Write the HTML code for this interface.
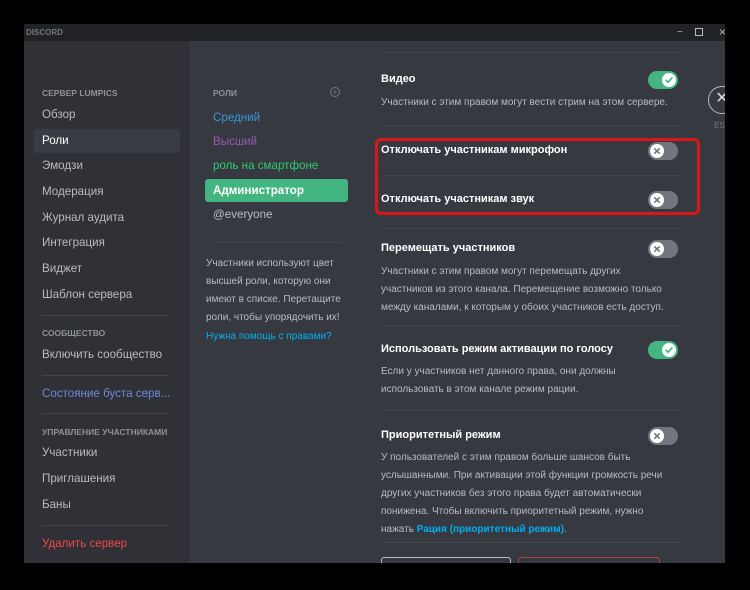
<!DOCTYPE html>
<html><head><meta charset="utf-8"><style>
*{margin:0;padding:0;box-sizing:border-box}
body{width:750px;height:590px;background:#000;position:relative;overflow:hidden;font-family:"Liberation Sans","Noto Sans CJK SC",sans-serif}
.a{position:absolute;white-space:nowrap}
.win{position:absolute;left:24px;top:24px;width:701px;height:539px;background:#36393f;overflow:hidden}
.tb{position:absolute;left:24px;top:24px;width:701px;height:17px;background:#202225}
.side{position:absolute;left:24px;top:41px;width:166px;height:522px;background:#2f3136}
.it{font-size:11.6px;color:#b9bbbe;left:42px}
.hd{font-size:8.5px;font-weight:bold;color:#8e9297;left:42px}
.sep{position:absolute;height:1px;background:#42454a}
.t{font-size:11px;font-weight:bold;color:#fff;left:381px}
.d{font-size:10px;color:#b9bbbe;left:381px;line-height:18px}
.tg{position:absolute;left:648px;width:30px;height:18px;border-radius:9px;background:#72767d}
.tg svg{position:absolute;top:2px;left:2px;width:14px;height:14px}
.tg.on{background:#43b581}.tg.on svg{left:14px}
</style></head><body>
<div class="win"></div>
<div class="tb"></div>
<div class="a" style="left:26px;top:28px;font-size:8px;font-weight:bold;color:#72767d">DISCORD</div>
<div class="a" style="left:677px;top:27px;font-size:10px;color:#b9bbbe">−</div>
<div class="a" style="left:695px;top:28px;width:8px;height:8px;border:1px solid #b9bbbe"></div>
<div class="a" style="left:719px;top:25px;font-size:12px;color:#b9bbbe">×</div>
<div class="side"></div>
<div class="a hd" style="top:88px">СЕРВЕР LUMPICS</div>
<div class="a it" style="top:108px">Обзор</div>
<div class="a" style="left:34px;top:129px;width:146px;height:24px;background:#393c43;border-radius:3px"></div>
<div class="a it" style="top:134px;color:#fff">Роли</div>
<div class="a it" style="top:159px">Эмодзи</div>
<div class="a it" style="top:185px">Модерация</div>
<div class="a it" style="top:211px">Журнал аудита</div>
<div class="a it" style="top:236px">Интеграция</div>
<div class="a it" style="top:262px">Виджет</div>
<div class="a it" style="top:288px">Шаблон сервера</div>
<div class="sep" style="left:42px;top:315px;width:126px"></div>
<div class="a hd" style="top:328px">СООБЩЕСТВО</div>
<div class="a it" style="top:348px">Включить сообщество</div>
<div class="sep" style="left:42px;top:375px;width:126px"></div>
<div class="a it" style="top:387px;color:#7289da">Состояние буста серв...</div>
<div class="sep" style="left:42px;top:413px;width:126px"></div>
<div class="a hd" style="top:427px">УПРАВЛЕНИЕ УЧАСТНИКАМИ</div>
<div class="a it" style="top:446px">Участники</div>
<div class="a it" style="top:472px">Приглашения</div>
<div class="a it" style="top:498px">Баны</div>
<div class="sep" style="left:42px;top:525px;width:126px"></div>
<div class="a it" style="top:537px;color:#f04747">Удалить сервер</div>

<div class="a hd" style="left:213px;top:88px">РОЛИ</div>
<div class="a" style="left:330px;top:87px;width:10px;height:10px;border:1px solid #72767d;border-radius:50%;font-size:9px;line-height:8px;text-align:center;color:#72767d">+</div>
<div class="a it" style="left:213px;top:111px;color:#3498db">Средний</div>
<div class="a it" style="left:213px;top:135px;color:#9b59b6">Высший</div>
<div class="a it" style="left:213px;top:159px;color:#2ecc71">роль на смартфоне</div>
<div class="a" style="left:205px;top:179px;width:143px;height:23px;background:#43b581;border-radius:3px"></div>
<div class="a it" style="left:213px;top:184px;color:#fff;font-weight:bold">Администратор</div>
<div class="a it" style="left:213px;top:208px">@everyone</div>
<div class="sep" style="left:213px;top:242px;width:130px"></div>
<div class="a" style="left:206px;top:255px;font-size:10px;color:#b9bbbe;line-height:18px;white-space:normal;width:145px">Участники используют цвет высшей роли, которую они имеют в списке. Перетащите роли, чтобы упорядочить их!</div>
<div class="a" style="left:206px;top:331px;font-size:10px;color:#00aff4">Нужна помощь с правами?</div>

<svg width="0" height="0" style="position:absolute"><defs>
<symbol id="ck" viewBox="0 0 14 14"><circle cx="7" cy="7" r="7" fill="#fff"/><path d="M4 7.2l2 2 4-4.4" stroke="#43b581" stroke-width="1.6" fill="none" stroke-linecap="round"/></symbol>
<symbol id="x" viewBox="0 0 14 14"><circle cx="7" cy="7" r="7" fill="#fff"/><path d="M4.8 4.8l4.4 4.4M9.2 4.8l-4.4 4.4" stroke="#72767d" stroke-width="1.6" stroke-linecap="round"/></symbol>
</defs></svg>

<div class="sep" style="left:381px;top:52px;width:299px"></div>
<div class="a t" style="top:73px">Видео</div>
<div class="tg on" style="top:71px"><svg><use href="#ck"/></svg></div>
<div class="a d" style="top:94px">Участники с этим правом могут вести стрим на этом сервере.</div>
<div class="sep" style="left:381px;top:125px;width:299px"></div>
<div class="a" style="left:375px;top:138px;width:325px;height:77px;border:3px solid #d81818;border-radius:6px"></div>
<div class="a t" style="top:144px">Отключать участникам микрофон</div>
<div class="tg" style="top:142px"><svg><use href="#x"/></svg></div>
<div class="sep" style="left:381px;top:175px;width:299px"></div>
<div class="a t" style="top:193px">Отключать участникам звук</div>
<div class="tg" style="top:191px"><svg><use href="#x"/></svg></div>
<div class="sep" style="left:381px;top:228px;width:299px"></div>
<div class="a t" style="top:242px">Перемещать участников</div>
<div class="tg" style="top:240px"><svg><use href="#x"/></svg></div>
<div class="a d" style="top:263px">Участники с этим правом могут перемещать других<br>участников из этого канала. Перемещение возможно только<br>между каналами, к которым у обоих участников есть доступ.</div>
<div class="sep" style="left:381px;top:325px;width:299px"></div>
<div class="a t" style="top:343px">Использовать режим активации по голосу</div>
<div class="tg on" style="top:341px"><svg><use href="#ck"/></svg></div>
<div class="a d" style="top:363px">Если у участников нет данного права, они должны<br>использовать в этом канале режим рации.</div>
<div class="sep" style="left:381px;top:410px;width:299px"></div>
<div class="a t" style="top:429px">Приоритетный режим</div>
<div class="tg" style="top:427px"><svg><use href="#x"/></svg></div>
<div class="a d" style="top:449px">У пользователей с этим правом больше шансов быть<br>услышанными. При активации этой функции громкость речи<br>других участников без этого права будет автоматически<br>понижена. Чтобы включить приоритетный режим, нужно<br>нажать <b style="color:#00aff4">Рация (приоритетный режим)</b>.</div>
<div class="sep" style="left:381px;top:542px;width:299px"></div>
<div class="a" style="left:381px;top:557px;width:130px;height:20px;border:1px solid #b9bbbe;border-radius:3px"></div>
<div class="a" style="left:518px;top:557px;width:142px;height:20px;border:1px solid #a84444;border-radius:3px"></div>
<div class="a" style="left:0;top:563px;width:750px;height:27px;background:#000"></div>
<div class="a" style="left:708px;top:86px;width:28px;height:28px;border:1.5px solid #b9bbbe;border-radius:50%;font-size:16px;line-height:24px;text-align:center;color:#dcddde">✕</div>
<div class="a" style="left:714px;top:121px;font-size:8px;color:#72767d">ESC</div>
<div class="a" style="left:725px;top:0;width:25px;height:590px;background:#000"></div>
</body></html>
